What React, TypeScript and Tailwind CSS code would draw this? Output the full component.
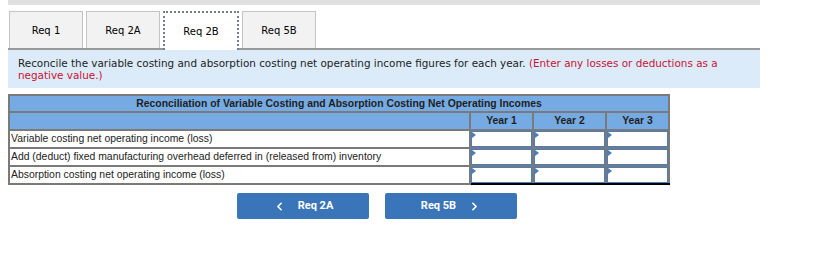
import { ChevronLeft, ChevronRight } from "lucide-react";

const tabs = ["Req 1", "Req 2A", "Req 2B", "Req 5B"];
const rows = [
  "Variable costing net operating income (loss)",
  "Add (deduct) fixed manufacturing overhead deferred in (released from) inventory",
  "Absorption costing net operating income (loss)",
];

const InputCell = ({ last }: { last: boolean }) => (
  <td className={`border-2 border-[#7a7a7a] p-0 h-[18px] ${last ? "border-b-black" : ""}`}>
    <div className="relative h-[16px] border border-[#4a7ebb] bg-white">
      <span className="absolute left-0 top-0 w-0 h-0 border-y-[3px] border-y-transparent border-l-[4px] border-l-[#4a7ebb]" />
    </div>
  </td>
);

export default function App() {
  return (
    <div className="w-[830px] h-[262px] bg-white px-2 font-['DejaVu_Sans',Verdana,sans-serif]">
      <div className="w-[752px] h-[5px] bg-[#e0e0e0]" />

      {/* tabs */}
      <div className="flex items-end pl-px gap-[3px] h-[43px]">
        {tabs.map((t) => {
          const active = t === "Req 2B";
          return active ? (
            <div
              key={t}
              className="w-[76px] h-[39px] -mb-[2px] bg-white border-2 border-b-0 border-dotted border-[#6e7f95] flex items-center justify-center text-[10px] text-black relative z-10"
            >
              {t}
            </div>
          ) : (
            <div
              key={t}
              className="w-[74px] h-[37px] bg-[#f2f2f2] border border-b-0 border-[#c4c4c4] flex items-center justify-center text-[10px] text-black"
            >
              {t}
            </div>
          );
        })}
      </div>

      {/* instructions */}
      <div className="w-[752px] h-[40px] bg-[#dbebf9] border-t-2 border-[#999999] px-[10px] pt-[7px] text-[10.4px] leading-[12px] text-[#222]">
        Reconcile the variable costing and absorption costing net operating income figures for each year.{" "}
        <span className="text-[#cc1133]">(Enter any losses or deductions as a negative value.)</span>
      </div>

      {/* table */}
      <table className="mt-[6px] w-[660px] border-collapse border-2 border-[#7a7a7a] font-['Liberation_Sans',Arial,sans-serif] text-[10.4px] text-[#222] table-fixed">
        <colgroup>
          <col className="w-[461px]" />
          <col className="w-[63px]" />
          <col className="w-[73px]" />
          <col className="w-[63px]" />
        </colgroup>
        <thead>
          <tr className="bg-[#76aae2] h-[17px]">
            <th colSpan={4} className="border-2 border-[#7a7a7a] font-bold text-[#1f1f1f] text-center leading-[13px] p-0">
              Reconciliation of Variable Costing and Absorption Costing Net Operating Incomes
            </th>
          </tr>
          <tr className="bg-[#76aae2] h-[18px]">
            <th className="border-2 border-[#7a7a7a] p-0" />
            {["Year 1", "Year 2", "Year 3"].map((y) => (
              <th key={y} className="border-2 border-[#7a7a7a] font-bold text-[#1f1f1f] text-center p-0">
                {y}
              </th>
            ))}
          </tr>
        </thead>
        <tbody>
          {rows.map((r, i) => (
            <tr key={r} className="h-[18px] bg-white">
              <td className="border-2 border-[#7a7a7a] px-[1px] py-0 whitespace-nowrap">{r}</td>
              <InputCell last={i === rows.length - 1} />
              <InputCell last={i === rows.length - 1} />
              <InputCell last={i === rows.length - 1} />
            </tr>
          ))}
        </tbody>
      </table>

      {/* nav buttons */}
      <div className="flex gap-[16px] pl-[229px] mt-[8px] font-['Roboto',sans-serif]">
        <button className="w-[132px] h-[26px] bg-[#3a74b9] rounded-[2px] text-white text-[11px] font-bold flex items-center justify-center gap-[12px]">
          <ChevronLeft size={13} strokeWidth={3} />
          Req 2A
        </button>
        <button className="w-[132px] h-[26px] bg-[#3a74b9] rounded-[2px] text-white text-[11px] font-bold flex items-center justify-center gap-[12px]">
          Req 5B
          <ChevronRight size={13} strokeWidth={3} />
        </button>
      </div>
    </div>
  );
}
